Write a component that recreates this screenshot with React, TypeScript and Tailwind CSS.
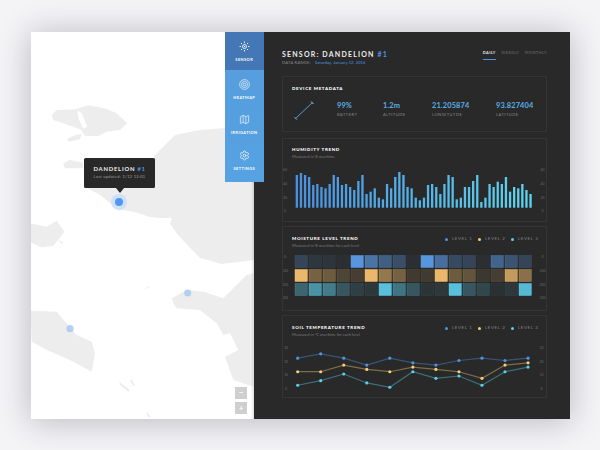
import React from "react";
import { Map as MapIcon, Settings } from "lucide-react";

const humidityTops = [120,114,120,126,150,147,156,160,147,120,126,150,147,156,165,138,120,177,170,160,188,193,147,160,126,111,120,156,160,188,196,188,150,147,156,177,147,120,126,193,188,156,156,138,120,201,188,147,156,140,147,126,170,156,160,147,165,177];

const heat = [
  { c: "#5b9be6", v: [.25,.12,.1,.05,1,.7,.5,.35,.05,1,.65,.3,.25,.05,.55,.4,.25] },
  { c: "#f5c06f", v: [1,.4,.35,.2,.15,1,.55,.4,.12,.12,1,.35,.3,.1,.15,.8,.5] },
  { c: "#5cc8e6", v: [.4,.7,.55,.3,.15,.1,1,.5,.3,.08,.1,1,.3,.2,.05,.1,.95] },
];

const lines = [
  { c: "#4f94e0", y: [127,114,127,148,127,141,148,134,127,134,127] },
  { c: "#f5cf78", y: [168,168,148,161,168,154,161,168,188,148,141] },
  { c: "#5cd0ea", y: [209,195,175,202,215,168,188,181,209,168,154] },
];

const font = { fontFamily: "Lato, 'Liberation Sans', sans-serif" };

function Axis({ labels, ys }: { labels: string[]; ys: number[] }) {
  return (
    <g fill="#6a6a6a" fontSize="3.4" textAnchor="middle" style={font}>
      {labels.map((l, i) => (
        <React.Fragment key={i}>
          <text x={285} y={ys[i] + 1.2}>{l}</text>
          <text x={542.5} y={ys[i] + 1.2}>{l}</text>
        </React.Fragment>
      ))}
    </g>
  );
}

function Legend() {
  const items = [["#4f94e0", "LEVEL 1"], ["#f5cf78", "LEVEL 2"], ["#5cd0ea", "LEVEL 3"]];
  return (
    <div className="flex">
      {items.map(([c, t]) => (
        <div key={t} className="flex items-center w-[33px]">
          <span className="w-[3px] h-[3px] rounded-full mr-[4px]" style={{ background: c }} />
          <span className="text-[4.4px] leading-[6px] tracking-[0.6px] text-[#858585]">{t}</span>
        </div>
      ))}
    </div>
  );
}

function CardTitle({ title, sub, legend }: { title: string; sub: string; legend?: boolean }) {
  return (
    <div className="pl-[9px] pr-[2px] shrink-0">
      <div className="flex justify-between items-center h-[6px]">
        <span className="text-[4.5px] leading-[6px] font-black tracking-[0.65px] text-white">{title}</span>
        {legend && <Legend />}
      </div>
      <div className="text-[4px] leading-[6px] mt-[0.5px] text-[#7b7b7b]">{sub}</div>
    </div>
  );
}

function Stat({ value, label, w }: { value: string; label: string; w: string }) {
  return (
    <div className={w}>
      <div className="text-[7.4px] leading-[9px] font-bold tracking-[0.15px] text-[#5aaee6]">{value}</div>
      <div className="text-[4px] leading-[6px] mt-[2px] tracking-[0.5px] text-[#8a8a8a]">{label}</div>
    </div>
  );
}

function SensorIcon() {
  const rays = [0, 45, 90, 135, 180, 225, 270, 315];
  return (
    <svg width="11" height="11" viewBox="-6 -6 12 12" fill="none" stroke="#fff">
      <circle r="2.2" strokeWidth="0.9" />
      <circle r="0.7" fill="#fff" stroke="none" />
      {rays.map((a) => (
        <line key={a} x1="0" y1="-3.9" x2="0" y2="-5.4" strokeWidth="1" transform={`rotate(${a})`} />
      ))}
    </svg>
  );
}

function HeatIcon() {
  return (
    <svg width="11" height="11" viewBox="-6 -6 12 12" fill="none" stroke="#fff" strokeWidth="0.7">
      <circle r="5.3" />
      <circle r="3.3" />
      <circle r="1.4" />
    </svg>
  );
}

function NavItem({ label, h, active, children }: { label: string; h: string; active?: boolean; children: React.ReactNode }) {
  return (
    <div className={`${h} ${active ? "bg-[#4377b5]" : ""} flex flex-col items-center pt-[9px]`}>
      <div className="h-[11px] flex items-center justify-center">{children}</div>
      <div className="text-[3.9px] leading-[5px] mt-[5px] font-bold tracking-[0.45px] text-white">{label}</div>
    </div>
  );
}

function MapShapes() {
  const z1 = (p: number[][]) => p.map(([x, y]) => `${20 + x / 3},${20 + y / 3}`).join(" ");
  const z6 = (p: number[][]) => p.map(([x, y]) => `${20 + x / 3},${220 + y / 3}`).join(" ");
  return (
    <svg className="absolute inset-0" width="223" height="387" viewBox="31 32 223 387">
      <g fill="#ededed">
        <polygon points={z1([[95,285],[110,270],[165,268],[205,256],[255,265],[290,280],[322,310],[300,330],[260,335],[235,348],[195,348],[185,330],[130,310],[100,300]])} />
        <polygon points={z1([[140,358],[165,345],[185,342],[180,358],[150,365]])} />
        <polygon points={z1([[130,430],[150,420],[190,428],[188,445],[135,445]])} />
        <polygon points="154,156 175,135 200,130 225,128 254,128 254,260 222,264 200,258 178,235 170,224 172,218 160,218 150,217 135,212 122,210 110,203 100,195 87,188 100,186 154,186" />
        <polygon points={z6([[32,10],[80,20],[110,2],[133,35],[100,78],[65,82],[32,68]])} />
        <polygon points={z6([[455,235],[500,210],[550,215],[610,235],[680,165],[700,160],[700,500],[640,480],[615,410],[655,390],[630,340],[610,345],[590,310],[540,270],[470,265],[460,250]])} />
        <polygon points={z6([[32,272],[110,275],[170,345],[215,365],[225,400],[215,455],[150,420],[80,390],[35,365]])} />
        <polygon points={z6([[298,485],[330,510],[325,515],[300,495]])} />
        <polygon points={z6([[335,478],[345,497],[340,498],[330,482]])} />
        <polygon points={z6([[380,575],[392,590],[388,594],[380,582]])} />
        <polygon points={z6([[375,205],[388,198],[388,201],[378,207]])} />
        <polygon points={z6([[112,58],[130,68],[125,72]])} />
      </g>
      <polygon fill="#fff" points={z1([[172,270],[185,280],[202,320],[190,326],[175,295]])} />
      <circle cx="119" cy="202" r="8" fill="#cfe0f7" />
      <circle cx="119" cy="202" r="4" fill="#4f97f0" />
      <circle cx="187.7" cy="293" r="3.6" fill="#b5cff0" />
      <circle cx="70" cy="328.7" r="3.6" fill="#b5cff0" />
    </svg>
  );
}

export default function App() {
  return (
    <div className="w-[600px] h-[450px] bg-[#f4f4f7] pt-[32px] pl-[31px] overflow-hidden" style={font}>
      <div className="relative w-[539px] h-[387px] flex shadow-[0_2px_30px_rgba(40,40,60,0.3)]">
        {/* Map */}
        <div className="relative w-[223px] h-full bg-white overflow-hidden">
          <MapShapes />
          <div className="absolute right-0 top-0 bottom-0 w-[3px] bg-gradient-to-r from-transparent to-[#00000022]" />
          <div className="absolute left-[52.5px] top-[125.5px] w-[71px] h-[30px] bg-[#282828] rounded-[1.5px] pl-[10px] pt-[7px]">
            <div className="text-[5.9px] leading-[8px] font-bold tracking-[0.75px] text-[#f0f0f0] whitespace-nowrap">
              DANDELION <span className="text-[#4f94e0]">#1</span>
            </div>
            <div className="text-[4px] leading-[6px] mt-[1px] tracking-[0.3px] text-[#a0a0a0] whitespace-nowrap">Last updated: 1/12 12:01</div>
            <div className="absolute left-[32.5px] top-[30px] w-0 h-0 border-l-[4px] border-r-[4px] border-t-[5px] border-l-transparent border-r-transparent border-t-[#282828]" />
          </div>
          <div className="absolute left-[204px] top-[355px] flex flex-col gap-[3px]">
            <div className="w-[12px] h-[12px] bg-[#cfcfcf] text-white text-[8px] leading-[11px] text-center font-bold">−</div>
            <div className="w-[12px] h-[12px] bg-[#cfcfcf] text-white text-[8px] leading-[12px] text-center font-bold">+</div>
          </div>
        </div>

        {/* Dark panel */}
        <div className="flex-1 bg-[#292929] pl-[28px] pr-[23px] flex flex-col">
          <div className="h-[44px] shrink-0 flex justify-between">
            <div className="pt-[17px]">
              <div className="text-[7px] leading-[10px] font-bold tracking-[1.2px] text-[#ededed]">
                SENSOR: DANDELION <span className="text-[#4f94e0]">#1</span>
              </div>
              <div className="text-[4.1px] leading-[6px] mt-[0.5px] flex text-[#8a8a8a] tracking-[0.25px]">
                <span>DATA RANGE:</span>
                <span className="ml-[4px] text-[#4f94e0] tracking-[0.08px]">Saturday, January 12, 2016</span>
              </div>
            </div>
            <div className="flex gap-[5.5px] pt-[18px] text-[3.9px] leading-[6px] tracking-[0.42px] text-[#5f5f5f] font-bold">
              <div className="w-[13px] h-[10px] border-b border-[#4f94e0] text-[#e8e8e8] whitespace-nowrap">DAILY</div>
              <div>WEEKLY</div>
              <div>MONTHLY</div>
            </div>
          </div>

          <div className="h-[56px] shrink-0 border border-[#343434] pt-[9px]">
            <div className="pl-[9px] text-[4.5px] leading-[6px] font-black tracking-[0.65px] text-white">DEVICE METADATA</div>
            <div className="flex mt-[9px] pl-[11px]">
              <div className="w-[43px] h-[19px]">
                <svg width="22" height="20" viewBox="294 101 22 20" fill="none">
                  <line x1="295" y1="119" x2="312.5" y2="102.5" stroke="#5aa7e0" strokeWidth="0.9" />
                  <line x1="294.5" y1="117" x2="297" y2="119.8" stroke="#5aa7e0" strokeWidth="0.9" />
                  <line x1="311" y1="101.5" x2="313.5" y2="104" stroke="#b8d8f0" strokeWidth="0.9" />
                </svg>
              </div>
              <Stat value="99%" label="BATTERY" w="w-[46px]" />
              <Stat value="1.2m" label="ALTITUDE" w="w-[49px]" />
              <Stat value="21.205874" label="LONGITUTDE" w="w-[64px]" />
              <Stat value="93.827404" label="LATITUDE" w="w-[50px]" />
            </div>
          </div>

          <div className="h-[84px] shrink-0 mt-[6px] border border-[#343434] pt-[8px] flex flex-col">
            <CardTitle title="HUMIDITY TREND" sub="Measured in % overtime" />
            <svg className="block" width="263" height="61" viewBox="283 160 263 61">
              <defs>
                <linearGradient id="bars" gradientUnits="userSpaceOnUse" x1="296" y1="0" x2="532" y2="0">
                  <stop offset="0" stopColor="#4a90e2" />
                  <stop offset="1" stopColor="#5ed4ec" />
                </linearGradient>
              </defs>
              <Axis labels={["60", "40", "20", "0"]} ys={[169.5, 183.5, 197.5, 211]} />
              {humidityTops.map((t, i) => {
                const top = 135 + t / 3;
                return <rect key={i} x={295.7 + i * 4.1} y={top} width="2.3" height={207.7 - top} fill="url(#bars)" />;
              })}
            </svg>
          </div>

          <div className="h-[85px] shrink-0 mt-[4px] border border-[#343434] pt-[9px] flex flex-col">
            <CardTitle title="MOISTURE LEVEL TREND" sub="Measured in % overtime for each level" legend />
            <svg className="block" width="263" height="60" viewBox="283 250 263 60">
              <Axis labels={["0", "100", "200", "300"]} ys={[258, 272, 286, 299]} />
              {heat.map((r, ri) =>
                r.v.map((o, i) => (
                  <rect key={`${ri}-${i}`} x={295 + i * 14} y={256.5 + ri * 14} width="12.3" height="12" fill={r.c} fillOpacity={o * 0.95} stroke={r.c} strokeOpacity={Math.min(1, o + 0.05)} strokeWidth="0.5" />
                ))
              )}
            </svg>
          </div>

          <div className="h-[83px] shrink-0 mt-[4px] border border-[#343434] pt-[9px] flex flex-col">
            <CardTitle title="SOIL TEMPERATURE TREND" sub="Measured in °C overtime for each level" legend />
            <svg className="block" width="263" height="60" viewBox="283 337 263 60">
              <Axis labels={["30", "20", "10", "0"]} ys={[347, 361, 374.5, 388]} />
              {lines.map((l) => {
                const pts = l.y.map((y, i) => [296.7 + i * 23.23, 315 + y / 3]);
                return (
                  <g key={l.c}>
                    <polyline points={pts.map((p) => p.join(",")).join(" ")} fill="none" stroke={l.c} strokeOpacity="0.42" strokeWidth="1.2" />
                    {pts.map((p, i) => (
                      <circle key={i} cx={p[0]} cy={p[1]} r="1.6" fill={l.c} />
                    ))}
                  </g>
                );
              })}
            </svg>
          </div>
        </div>

        {/* Sidebar */}
        <div className="absolute left-[194px] top-0 w-[38.5px] h-[150px] bg-gradient-to-b from-[#569cdc] to-[#56a2e2] flex flex-col">
          <NavItem label="SENSOR" h="h-[38px]" active><SensorIcon /></NavItem>
          <NavItem label="HEATMAP" h="h-[35px]"><HeatIcon /></NavItem>
          <NavItem label="IRRIGATION" h="h-[36px]"><MapIcon size={11} color="#fff" strokeWidth={1.4} /></NavItem>
          <NavItem label="SETTINGS" h="h-[41px]"><Settings size={11} color="#fff" strokeWidth={1.5} /></NavItem>
        </div>
      </div>
    </div>
  );
}
